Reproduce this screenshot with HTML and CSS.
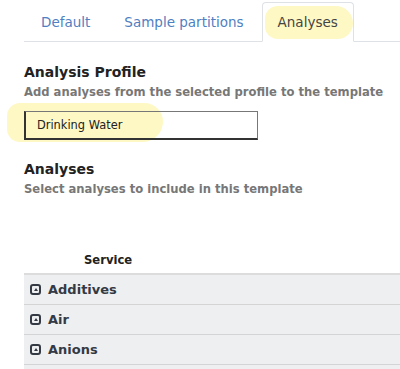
FILE: index.html
```html
<!DOCTYPE html>
<html lang="en">
<head>
    <meta charset="UTF-8">
    <title>Template - Analyses</title>
    <link rel="stylesheet" href="styles.css">
</head>
<body>
    <div class="page">
        <ul class="tabs">
            <li class="tab"><a href="#">Default</a></li>
            <li class="tab"><a href="#">Sample partitions</a></li>
            <li class="tab active">
                <span class="marker marker-tab"></span>
                <a href="#">Analyses</a>
            </li>
        </ul>

        <div class="field">
            <h3>Analysis Profile</h3>
            <p class="help">Add analyses from the selected profile to the template</p>
            <div class="input-wrap">
                <span class="marker marker-input"></span>
                <input type="text" value="Drinking Water">
            </div>
        </div>

        <div class="field field-analyses">
            <h3>Analyses</h3>
            <p class="help">Select analyses to include in this template</p>
        </div>

        <table class="services">
            <thead>
                <tr><th>Service</th></tr>
            </thead>
            <tbody>
                <tr class="category"><td><span class="toggle"></span>Additives</td></tr>
                <tr class="category"><td><span class="toggle"></span>Air</td></tr>
                <tr class="category"><td><span class="toggle"></span>Anions</td></tr>
                <tr class="category"><td></td></tr>
            </tbody>
        </table>
    </div>
</body>
</html>
```

FILE: styles.css
```css
body {
    margin: 0;
    font-family: "DejaVu Sans", sans-serif;
    color: #222;
    background: #fff;
}
.page {
    padding: 2px 0 0 24px;
    overflow: hidden;
    height: 367px;
}
.tabs {
    list-style: none;
    margin: 0;
    padding: 0 0 0 1px;
    display: flex;
    gap: 2px;
    border-bottom: 1px solid #dee2e6;
    height: 39px;
}
.tab {
    position: relative;
    margin-bottom: -1px;
    border: 1px solid transparent;
    border-radius: 4px 4px 0 0;
}
.tab a {
    position: relative;
    display: block;
    padding: 11px 15px 0;
    height: 27px;
    font-size: 13.5px;
    color: #4f80c2;
    text-decoration: none;
}
.tab.active {
    border-color: #dee2e6 #dee2e6 #fff;
    background: #fff;
}
.tab.active a {
    color: #444;
}
.marker {
    position: absolute;
    background: #fdf6b0;
    opacity: 0.75;
}
.marker-tab {
    left: 2px;
    top: 3px;
    width: 88px;
    height: 33px;
    border-radius: 16px 22px 20px 16px;
}
.field {
    margin-top: 21px;
}
.field h3 {
    margin: 0;
    font-size: 14px;
    line-height: 18px;
}
.field-analyses {
    margin-top: 20px;
}
.help {
    margin: 3px 0 0;
    font-size: 11.6px;
    font-weight: bold;
    color: #777;
    line-height: 16px;
}
.input-wrap {
    position: relative;
    margin-top: 11px;
    width: 234px;
}
.marker-input {
    left: -17px;
    top: -8px;
    width: 156px;
    height: 39px;
    border-radius: 14px 20px 22px 14px;
}
.input-wrap input {
    position: relative;
    box-sizing: border-box;
    width: 234px;
    height: 29px;
    padding: 0 11px;
    border: 1px solid #333;
    border-left-width: 2px;
    border-bottom-width: 2px;
    border-top-color: #777;
    border-right-color: #777;
    background: transparent;
    font-family: "DejaVu Sans", sans-serif;
    font-size: 11.4px;
    color: #222;
}
.services {
    margin-top: 55px;
    width: 376px;
    border-collapse: collapse;
}
.services th {
    text-align: left;
    padding: 0 0 5px 60px;
    font-size: 11.6px;
    line-height: 16px;
    border-bottom: 2px solid #dcdcdc;
}
.category td {
    background: #eeeff1;
    border-bottom: 1px solid #d4d4d4;
    height: 29px;
    padding: 0 0 0 6px;
    font-size: 13px;
    font-weight: bold;
    color: #343a44;
}
.toggle {
    display: inline-block;
    box-sizing: border-box;
    width: 11px;
    height: 11px;
    margin-right: 7px;
    border: 2px solid #343a44;
    border-radius: 3px;
    vertical-align: -1px;
    position: relative;
}
.toggle::after {
    content: "";
    position: absolute;
    left: 1.5px;
    top: 1.5px;
    border-left: 2px solid transparent;
    border-right: 2px solid transparent;
    border-bottom: 3px solid #343a44;
}
```
